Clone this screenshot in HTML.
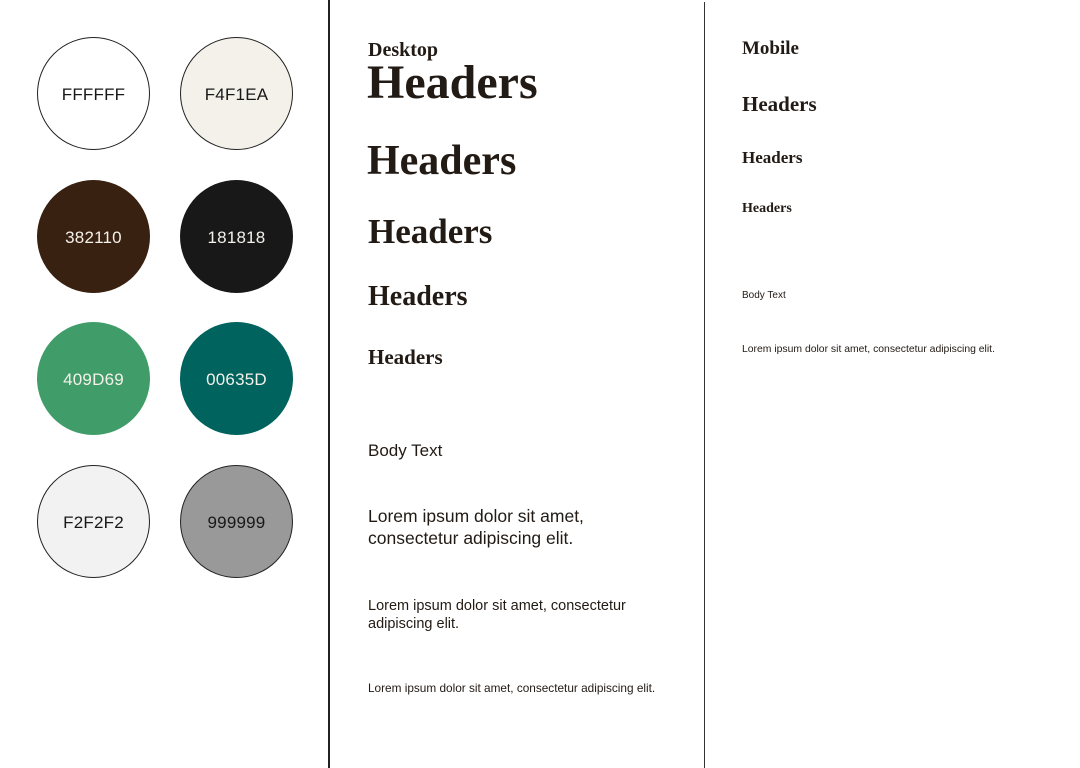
<!DOCTYPE html>
<html><head><meta charset="utf-8"><style>
*{margin:0;padding:0;box-sizing:border-box}
body{width:1080px;height:768px;background:#fff;position:relative;overflow:hidden;color:#221a14}
.c{position:absolute;width:113px;height:113px;border-radius:50%;display:flex;align-items:center;justify-content:center;font-family:"Liberation Sans",sans-serif;font-size:17px;letter-spacing:0.2px;padding-top:3px}
.t{position:absolute;white-space:nowrap}
.s{font-family:"Liberation Serif",serif;font-weight:bold}
.n{font-family:"Liberation Sans",sans-serif}
</style></head><body>
<div style="position:absolute;left:328px;top:0;width:2px;height:768px;background:#222"></div>
<div style="position:absolute;left:704px;top:2px;width:1px;height:766px;background:#333"></div>

<div class="c" style="left:37px;top:37px;border:1px solid #222;background:#fff;color:#181818">FFFFFF</div>
<div class="c" style="left:180px;top:37px;border:1px solid #222;background:#f4f1ea;color:#181818">F4F1EA</div>
<div class="c" style="left:37px;top:180px;background:#382110;color:#f4f1ea">382110</div>
<div class="c" style="left:180px;top:180px;background:#181818;color:#f4f1ea">181818</div>
<div class="c" style="left:37px;top:322px;background:#409d69;color:#f4f1ea">409D69</div>
<div class="c" style="left:180px;top:322px;background:#00635d;color:#f4f1ea">00635D</div>
<div class="c" style="left:37px;top:465px;border:1px solid #222;background:#f2f2f2;color:#181818">F2F2F2</div>
<div class="c" style="left:180px;top:465px;border:1px solid #222;background:#999;color:#181818">999999</div>

<div class="t s" style="left:368px;top:38px;font-size:20px;line-height:24px">Desktop</div>
<div class="t s" style="left:367px;top:56px;font-size:48px;line-height:54px">Headers</div>
<div class="t s" style="left:367px;top:138px;font-size:42px;line-height:46px">Headers</div>
<div class="t s" style="left:368px;top:212px;font-size:35px;line-height:40px">Headers</div>
<div class="t s" style="left:368px;top:281px;font-size:28px;line-height:32px">Headers</div>
<div class="t s" style="left:368px;top:344px;font-size:21px;line-height:26px">Headers</div>
<div class="t n" style="left:368px;top:440px;font-size:17px;line-height:22px">Body Text</div>
<div class="t n" style="left:368px;top:505px;font-size:17.5px;line-height:22px">Lorem ipsum dolor sit amet,<br>consectetur adipiscing elit.</div>
<div class="t n" style="left:368px;top:597px;font-size:14.5px;line-height:18px">Lorem ipsum dolor sit amet, consectetur<br>adipiscing elit.</div>
<div class="t n" style="left:368px;top:681px;font-size:11.8px;line-height:14px">Lorem ipsum dolor sit amet, consectetur adipiscing elit.</div>

<div class="t s" style="left:742px;top:37px;font-size:19px;line-height:24px">Mobile</div>
<div class="t s" style="left:742px;top:91px;font-size:21px;line-height:26px">Headers</div>
<div class="t s" style="left:742px;top:148px;font-size:17px;line-height:20px">Headers</div>
<div class="t s" style="left:742px;top:200px;font-size:14px;line-height:17px">Headers</div>
<div class="t n" style="left:742px;top:289px;font-size:10px;line-height:13px">Body Text</div>
<div class="t n" style="left:742px;top:343px;font-size:10.4px;line-height:13px">Lorem ipsum dolor sit amet, consectetur adipiscing elit.</div>
</body></html>
